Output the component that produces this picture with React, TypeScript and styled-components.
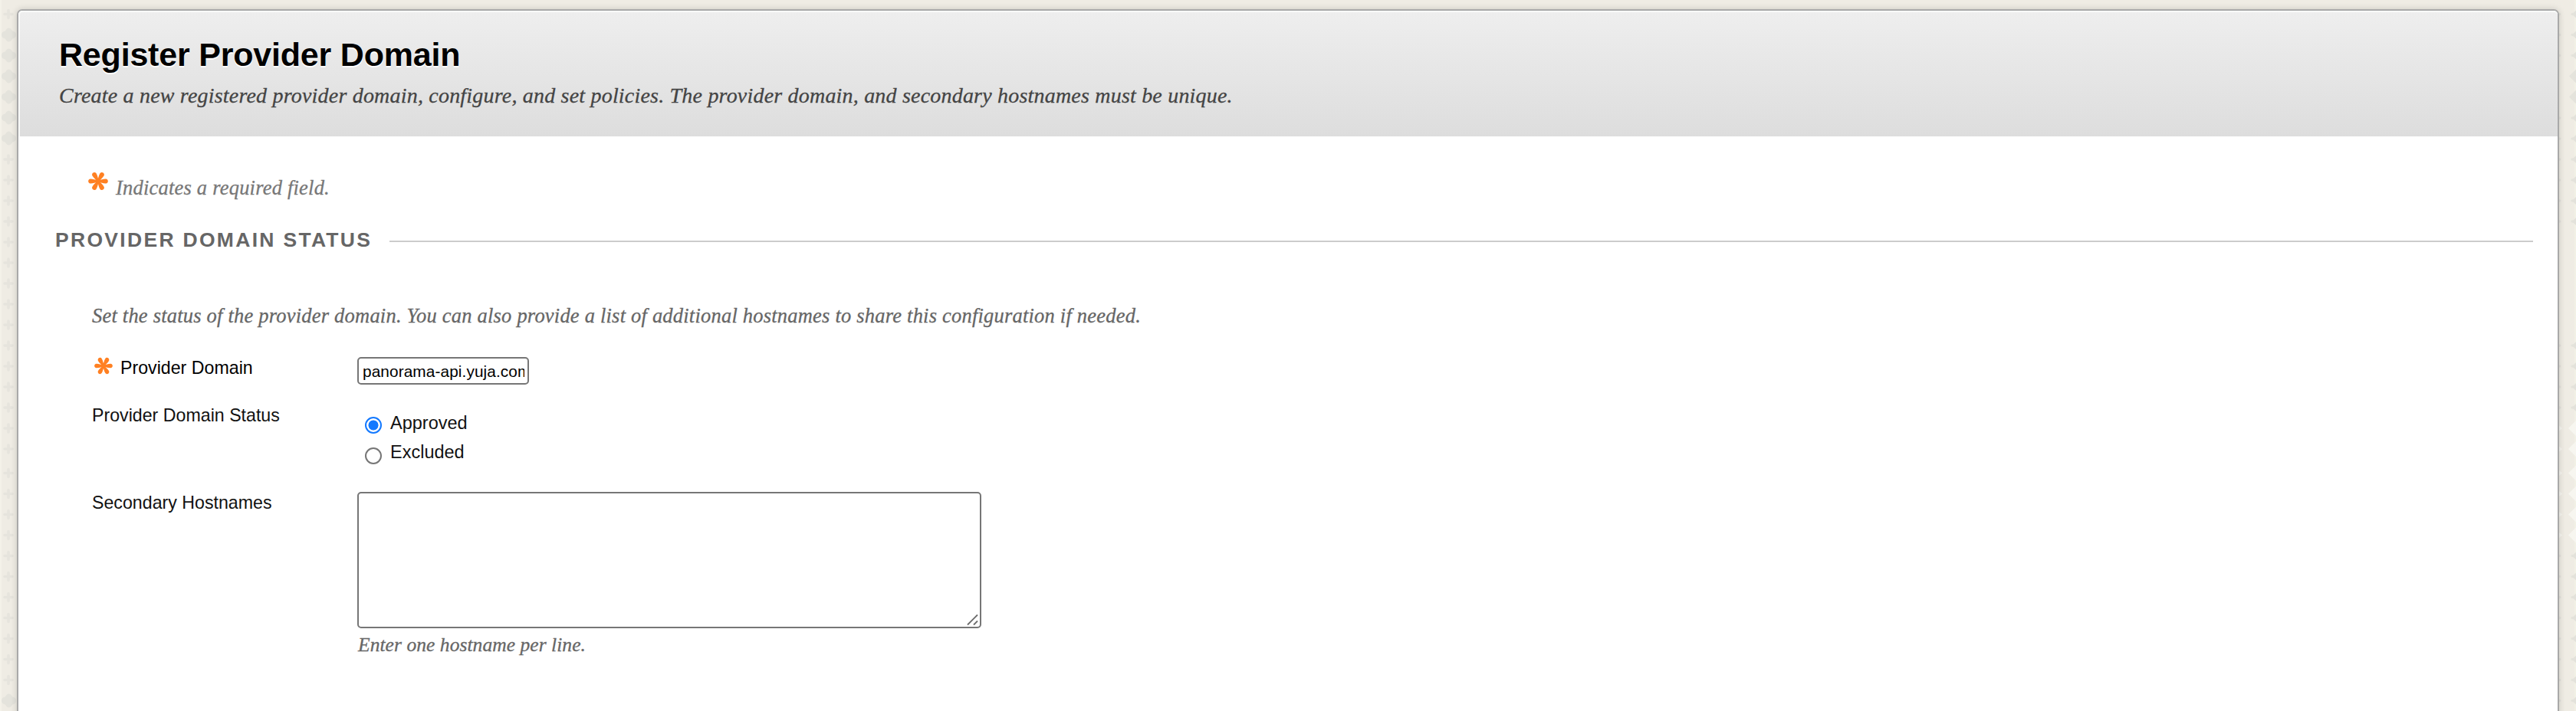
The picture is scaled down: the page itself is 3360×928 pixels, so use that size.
import React, { useState } from 'react';
import styled, { createGlobalStyle } from 'styled-components';

type DomainStatus = 'Approved' | 'Excluded';

const range = (start: number, count: number, step = 27) =>
  Array.from({ length: count }, (_, i) => start + i * step);

// vertical positions of the background ornaments
const leftDiamonds = [...range(45.5, 6), 914.5];
const leftPluses = [18.5, ...range(208, 15), ...range(617.5, 11)];
const rightMarks = [...range(18.5, 3), ...range(154, 6), ...range(451, 4), ...range(725.5, 8)];
const rightDiamonds = [99.5, 126.5];
const rightLights = [559, 586, 617.5, 644.5, 671.5, 698.5];

const PageBackdrop = () => (
  <Backdrop width="3360" height="928" viewBox="0 0 3360 928">
    <defs>
      <path id="diamond" d="M0 -9C3 -9 4 -5.500 5 -5C8 -4 9.500 -3 9.500 0C9.500 3 8 4 5 5C4 5.500 3 9 0 9C-3 9 -4 5.500 -5 5C-8 4 -9.500 3 -9.500 0C-9.500 -3 -8 -4 -5 -5C-4 -5.500 -3 -9 0 -9Z" />
      <path id="plus" d="M0 -5V5M-5 0H5" strokeWidth="3.600" strokeLinecap="round" />
    </defs>
    <rect width="2" height="928" fill="#f4f2e9" />
    <rect x="3358" width="2" height="928" fill="#f2f1e6" />
    <g fill="#e4e3dc">
      {leftDiamonds.map(y => <use key={y} href="#diamond" x="11.500" y={y} />)}
      {rightDiamonds.map(y => <path key={y} d={`M3360 ${y - 9}L3351 ${y}L3360 ${y + 9}Z`} />)}
    </g>
    <g stroke="#e6e4dd">
      {leftPluses.map(y => <use key={y} href="#plus" x="11" y={y} />)}
    </g>
    <g fill="#e3e2db">
      {rightMarks.map(y => (
        <React.Fragment key={y}>
          <path d={`M3353.500 ${y - 1}L3357 ${y - 2}L3360 ${y - 5}V${y + 5}L3357 ${y + 2}L3353.500 ${y + 1}Z`} />
          <circle cx="3338.500" cy={y} r="1.800" />
        </React.Fragment>
      ))}
    </g>
    <g fill="#f7f6f0">
      {rightLights.map(y => (
        <React.Fragment key={y}>
          <path d={`M3360 ${y - 10}L3350 ${y}L3360 ${y + 10}Z`} />
          <path d={`M3338 ${y - 3.5}L3342 ${y}L3338 ${y + 3.5}Z`} />
        </React.Fragment>
      ))}
    </g>
  </Backdrop>
);

const RequiredIcon = ({ width = 26, height = 25 }: { width?: number; height?: number }) => (
  <StarSvg width={width} height={height} viewBox="-13 -12.500 26 25" preserveAspectRatio="none">
    {[0, 60, 120, 180, 240, 300].map(angle => (
      <path
        key={angle}
        transform={`rotate(${angle})`}
        d="M0 -1.300C4 -1.600 6.500 -3.100 10 -3C13.800 -2.700 13.800 2.700 10 3C6.500 3.100 4 1.600 0 1.300Z"
      />
    ))}
  </StarSvg>
);

const App: React.FC = () => {
  const [domain, setDomain] = useState('panorama-api.yuja.com');
  const [status, setStatus] = useState<DomainStatus>('Approved');
  const [hostnames, setHostnames] = useState('');

  return (
    <Page>
      <GlobalStyle />
      <PageBackdrop />
      <Panel>
        <Header>
          <Title>Register Provider Domain</Title>
          <Subtitle>
            Create a new registered provider domain, configure, and set policies. The provider domain, and secondary
            hostnames must be unique.
          </Subtitle>
        </Header>
        <Body>
          <RequiredNote>
            <RequiredIcon />
            <NoteText>Indicates a required field.</NoteText>
          </RequiredNote>
          <SectionHeading>
            <SectionTitle>PROVIDER DOMAIN STATUS</SectionTitle>
            <SectionRule />
          </SectionHeading>
          <Section>
            <Instructions>
              Set the status of the provider domain. You can also provide a list of additional hostnames to share this
              configuration if needed.
            </Instructions>
            <Field $gap={38}>
              <Label htmlFor="domain" $required>
                <RequiredIcon width={24} height={23} />
                Provider Domain
              </Label>
              <TextInput id="domain" value={domain} onChange={e => setDomain(e.target.value)} />
            </Field>
            <Field $gap={26}>
              <Label as="span">Provider Domain Status</Label>
              <Options>
                {(['Approved', 'Excluded'] as DomainStatus[]).map((option, index) => (
                  <Option key={option}>
                    <Radio
                      type="radio"
                      name="status"
                      $drop={index ? 8 : 6}
                      checked={status === option}
                      onChange={() => setStatus(option)}
                    />
                    {option}
                  </Option>
                ))}
              </Options>
            </Field>
            <Field $gap={36}>
              <Label htmlFor="hostnames">Secondary Hostnames</Label>
              <div>
                <TextAreaWrap>
                  <TextArea id="hostnames" value={hostnames} onChange={e => setHostnames(e.target.value)} />
                  <Grip width="16" height="16" viewBox="0 0 16 16">
                    <path d="M1 14.500L14 1.500M9 14.500L14 9.500" />
                  </Grip>
                </TextAreaWrap>
                <Hint>Enter one hostname per line.</Hint>
              </div>
            </Field>
          </Section>
        </Body>
      </Panel>
    </Page>
  );
};

export default App;

const GlobalStyle = createGlobalStyle`
  * {
    box-sizing: border-box;
  }

  body {
    margin: 0;
    overflow: hidden;
    background: #efece4;
    font-family: "Liberation Sans", Arial, sans-serif;
  }
`;

const Page = styled.div`
  position: relative;
  height: 928px;
  padding: 12px 22px 0;
  overflow: hidden;
`;

const Backdrop = styled.svg`
  position: absolute;
  top: 0;
  left: 0;
`;

const Panel = styled.main`
  position: relative;
  height: 960px;
  border: 2px solid #a9a9a9;
  border-radius: 7px;
  background: #fff;
  box-shadow: 0 0 9px rgba(0, 0, 0, 0.16);
`;

const Header = styled.header`
  height: 164px;
  padding: 30px 0 0 51px;
  border-top: 2px solid #f9faf9;
  border-left: 2px solid #f9faf9;
  border-radius: 5px 5px 0 0;
  background: linear-gradient(#eeeeee, #dddddd);
`;

const Title = styled.h1`
  margin: 0;
  font-size: 43px;
  font-weight: bold;
  line-height: 50px;
  letter-spacing: -0.2px;
  color: #000;
  text-shadow: 0 2px 0 #fff;
`;

const SerifText = styled.p`
  margin: 0;
  font-family: "Liberation Serif", "Times New Roman", serif;
  font-size: 26.5px;
  font-style: italic;
  line-height: 32px;
  letter-spacing: 0.21px;
  white-space: nowrap;
  color: #666;
  -webkit-text-stroke: 0.3px currentColor;
`;

const Subtitle = styled(SerifText)`
  margin-top: 12px;
  font-size: 28px;
  line-height: 34px;
  letter-spacing: 0.2px;
  color: #444;
`;

const Body = styled.div`
  padding: 46px 32px 0 48px;
`;

const RequiredNote = styled.div`
  display: flex;
  gap: 10px;
  padding-left: 43px;
`;

const StarSvg = styled.svg`
  flex: none;
  fill: #ff8022;
`;

const NoteText = styled(SerifText)`
  margin-top: 5px;
  color: #777;
`;

const SectionHeading = styled.div`
  display: flex;
  align-items: center;
  gap: 23px;
  margin-top: 36px;
`;

const SectionTitle = styled.h2`
  margin: 0;
  font-size: 26.5px;
  font-weight: bold;
  line-height: 32px;
  letter-spacing: 2.3px;
  color: #666;
`;

const SectionRule = styled.div`
  flex: 1;
  height: 2px;
  margin-top: 4px;
  background: #ccc;
`;

const Section = styled.section`
  padding: 67px 0 0 48px;
`;

const Instructions = styled(SerifText)``;

const Field = styled.div<{ $gap: number }>`
  display: grid;
  grid-template-columns: 346px 1fr;
  align-items: start;
  margin-top: ${({ $gap }) => $gap}px;
`;

const Label = styled.label<{ $required?: boolean }>`
  display: flex;
  align-items: flex-start;
  gap: 10px;
  padding-left: ${({ $required }) => ($required ? '3px' : '0')};
  font-size: 23.2px;
  line-height: 28px;
  color: ${({ $required }) => ($required ? '#000' : '#111')};
`;

const TextInput = styled.input`
  width: 224px;
  height: 36px;
  padding: 2px 4px 0 5px;
  border: 2px solid #767676;
  border-radius: 5px;
  outline: none;
  background: #fff;
  font-family: inherit;
  font-size: 20.8px;
  letter-spacing: 0.1px;
  color: #000;
`;

const Options = styled.div`
  padding: 10px 0 0 10px;
`;

const Option = styled.label`
  display: flex;
  align-items: flex-start;
  gap: 11px;
  font-size: 23.5px;
  line-height: 28px;
  color: #111;

  & + & {
    margin-top: 10px;
  }
`;

const Radio = styled.input<{ $drop: number }>`
  appearance: none;
  flex: none;
  width: 22px;
  height: 22px;
  margin: ${({ $drop }) => $drop}px 0 0;
  border: 2px solid #767676;
  border-radius: 50%;
  background: #fff;

  &:checked {
    border-color: #1379ff;
    background: radial-gradient(circle, #1379ff 6.2px, #fff 6.8px);
  }
`;

const TextAreaWrap = styled.div`
  position: relative;
  width: 814px;
  height: 178px;
`;

const TextArea = styled.textarea`
  display: block;
  width: 100%;
  height: 100%;
  padding: 4px;
  border: 2px solid #767676;
  border-radius: 5px;
  outline: none;
  resize: none;
  font-family: inherit;
  font-size: 20.8px;
`;

const Grip = styled.svg`
  position: absolute;
  right: 3px;
  bottom: 3px;
  fill: none;
  stroke: #6b6b6b;
  stroke-width: 1.8;
`;

const Hint = styled(SerifText)`
  margin-top: 6px;
  padding-left: 1px;
  font-size: 25.5px;
  letter-spacing: 0.06px;
`;
